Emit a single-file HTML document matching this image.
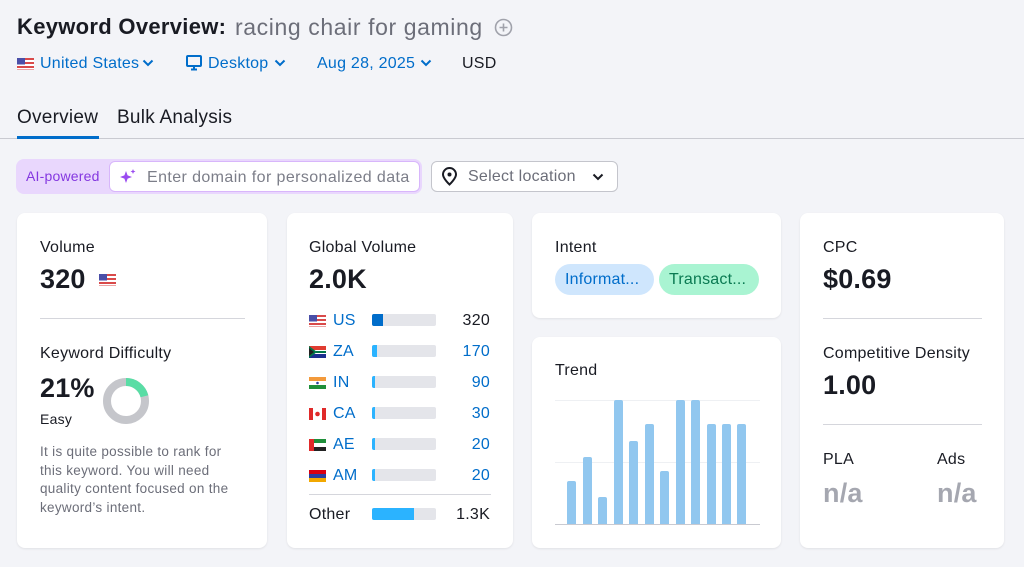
<!DOCTYPE html>
<html><head><meta charset="utf-8"><style>
*{box-sizing:border-box;margin:0;padding:0}
body{width:1024px;height:567px;background:#f3f4f8;font-family:"Liberation Sans",Arial,sans-serif;color:#191b23;position:relative;overflow:hidden;letter-spacing:0.25px}
.a{position:absolute;white-space:nowrap}
.card{position:absolute;background:#fff;border-radius:8px;box-shadow:0 1px 2px rgba(0,0,0,.08)}
.blue{color:#006dca}
.lbl{font-size:16px;color:#191b23}
.big{font-size:27px;font-weight:bold;letter-spacing:0.2px}
.hr{position:absolute;height:1px;background:#d5d6dc}
.bar{position:absolute;left:372px;width:64px;height:12px;background:#e4e5ea;border-radius:2px}
.bar i{display:block;height:12px;background:#2bb3ff;border-radius:2px 0 0 2px}
.flag{position:absolute;left:309px;width:17px;height:12px}
.cc{position:absolute;left:333px;font-size:16px;color:#006dca}
.num{position:absolute;right:534px;font-size:16px;color:#006dca;text-align:right}
.tb{position:absolute;width:9px;background:#91c7ef;border-radius:2px 2px 0 0;bottom:43px}
</style></head><body>
<div class="a" style="left:17px;top:14px;font-size:22px;font-weight:bold;letter-spacing:0.3px">Keyword Overview:</div>
<div class="a" style="left:235px;top:14px;font-size:23px;color:#6c6e79;letter-spacing:0.6px">racing chair for gaming</div>
<svg class="a" style="left:494px;top:18px" width="19" height="19" viewBox="0 0 19 19"><circle cx="9.5" cy="9.5" r="8" fill="none" stroke="#a0a2ab" stroke-width="1.6"/><path d="M9.5 5.5v8M5.5 9.5h8" stroke="#a0a2ab" stroke-width="1.6"/></svg>

<svg class="a" style="left:17px;top:58px" width="17" height="12"><rect width="17" height="12" fill="#d94a4a"/><rect y="2" width="17" height="2" fill="#fff"/><rect y="6" width="17" height="2" fill="#fff"/><rect y="10" width="17" height="1.5" fill="#fff"/><rect width="8" height="6.5" fill="#4a4fa8"/></svg>
<div class="a blue" style="left:40px;top:55px;font-size:16px">United States</div>
<svg class="a" style="left:142px;top:59px" width="12" height="8"><path d="M1.5 1.5l4.5 4.5 4.5-4.5" fill="none" stroke="#006dca" stroke-width="2"/></svg>
<svg class="a" style="left:186px;top:55px" width="16" height="16"><rect x="1" y="1" width="14" height="10" rx="1" fill="none" stroke="#006dca" stroke-width="2"/><path d="M5 14.5h6M8 11v3" stroke="#006dca" stroke-width="2"/></svg>
<div class="a blue" style="left:208px;top:55px;font-size:16px">Desktop</div>
<svg class="a" style="left:274px;top:59px" width="12" height="8"><path d="M1.5 1.5l4.5 4.5 4.5-4.5" fill="none" stroke="#006dca" stroke-width="2"/></svg>
<div class="a blue" style="left:317px;top:55px;font-size:16px">Aug 28, 2025</div>
<svg class="a" style="left:420px;top:59px" width="12" height="8"><path d="M1.5 1.5l4.5 4.5 4.5-4.5" fill="none" stroke="#006dca" stroke-width="2"/></svg>
<div class="a" style="left:462px;top:55px;font-size:16px">USD</div>

<div class="a" style="left:17px;top:107px;font-size:19px">Overview</div>
<div class="a" style="left:117px;top:107px;font-size:19px">Bulk Analysis</div>
<div class="a" style="left:0;top:138px;width:1024px;height:1px;background:#c9cad1"></div>
<div class="a" style="left:17px;top:136px;width:82px;height:3px;background:#006dca"></div>

<div class="a" style="left:16px;top:159px;width:406px;height:35px;background:#e9d7fd;border-radius:8px"></div>
<div class="a" style="left:26px;top:168px;font-size:14px;color:#8437e0;letter-spacing:0.2px">AI-powered</div>
<div class="a" style="left:109px;top:161px;width:311px;height:31px;background:#fff;border:1px solid #d8b6fb;border-radius:6px"></div>
<svg class="a" style="left:119px;top:168px" width="18" height="18" viewBox="0 0 18 18"><path d="M7 3l1.6 4.4L13 9l-4.4 1.6L7 15l-1.6-4.4L1 9l4.4-1.6z" fill="#9a4bf0"/><path d="M14 1l.7 1.8 1.8.7-1.8.7L14 6l-.7-1.8-1.8-.7 1.8-.7z" fill="#9a4bf0"/></svg>
<div class="a" style="left:147px;top:169px;font-size:16px;color:#7c7e89;letter-spacing:0.4px">Enter domain for personalized data</div>
<div class="a" style="left:431px;top:161px;width:187px;height:31px;background:#fff;border:1px solid #c4c5cc;border-radius:6px"></div>
<svg class="a" style="left:441px;top:167px" width="17" height="19" viewBox="0 0 17 19"><path d="M8.5 17.5S2 11.5 2 7.5a6.5 6.5 0 0 1 13 0c0 4-6.5 10-6.5 10z" fill="none" stroke="#191b23" stroke-width="2"/><circle cx="8.5" cy="7.5" r="2" fill="#191b23"/></svg>
<div class="a" style="left:468px;top:168px;font-size:16px;color:#6c6e79">Select location</div>
<svg class="a" style="left:592px;top:173px" width="12" height="8"><path d="M1.5 1.5l4.5 4.5 4.5-4.5" fill="none" stroke="#191b23" stroke-width="2"/></svg>

<!-- card 1 -->
<div class="card" style="left:17px;top:213px;width:250px;height:335px"></div>
<div class="a lbl" style="left:40px;top:239px">Volume</div>
<div class="a big" style="left:40px;top:264px">320</div>
<svg class="a" style="left:99px;top:274px" width="17" height="12"><rect width="17" height="12" fill="#d94a4a"/><rect y="2" width="17" height="2" fill="#fff"/><rect y="6" width="17" height="2" fill="#fff"/><rect y="10" width="17" height="1.5" fill="#fff"/><rect width="8" height="6.5" fill="#4a4fa8"/></svg>
<div class="hr" style="left:40px;top:318px;width:205px"></div>
<div class="a lbl" style="left:40px;top:345px">Keyword Difficulty</div>
<div class="a big" style="left:40px;top:373px">21%</div>
<div class="a" style="left:40px;top:411px;font-size:14px;color:#191b23">Easy</div>
<svg class="a" style="left:102px;top:377px" width="48" height="48" viewBox="0 0 48 48"><circle cx="24" cy="24" r="19" fill="none" stroke="#c5c6cb" stroke-width="8"/><circle cx="24" cy="24" r="19" fill="none" stroke="#59dda5" stroke-width="8" stroke-dasharray="25 200" transform="rotate(-90 24 24)"/></svg>
<div class="a" style="left:40px;top:443px;font-size:13.5px;line-height:18.5px;color:#6c6e79;white-space:normal;width:205px;letter-spacing:0.3px">It is quite possible to rank for this keyword. You will need quality content focused on the keyword’s intent.</div>

<!-- card 2 -->
<div class="card" style="left:287px;top:213px;width:226px;height:335px"></div>
<div class="a lbl" style="left:309px;top:239px">Global Volume</div>
<div class="a big" style="left:309px;top:264px">2.0K</div>

<svg class="flag" style="top:315px"><rect width="17" height="12" fill="#d94a4a"/><rect y="2" width="17" height="2" fill="#fff"/><rect y="6" width="17" height="2" fill="#fff"/><rect y="10" width="17" height="1.5" fill="#fff"/><rect width="8" height="6.5" fill="#4a4fa8"/></svg>
<div class="cc" style="top:312px">US</div><div class="bar" style="top:314px"><i style="width:11px;background:#006dca"></i></div><div class="num" style="top:312px;color:#191b23">320</div>

<svg class="flag" style="top:346px"><rect width="17" height="12" fill="#fff"/><rect width="17" height="4" fill="#e03c31"/><rect y="8" width="17" height="4" fill="#1b2f8f"/><path d="M0 0L8 6 0 12z" fill="#007749"/><path d="M0 2L5 6 0 10z" fill="#222"/><rect x="7" y="5" width="10" height="2" fill="#007749"/></svg>
<div class="cc" style="top:343px">ZA</div><div class="bar" style="top:345px"><i style="width:5px"></i></div><div class="num" style="top:343px">170</div>

<svg class="flag" style="top:377px"><rect width="17" height="4" fill="#f39a3b"/><rect y="4" width="17" height="4" fill="#fff"/><rect y="8" width="17" height="4" fill="#1f8f3a"/><circle cx="8.5" cy="6" r="1.3" fill="#2a3f9a"/></svg>
<div class="cc" style="top:374px">IN</div><div class="bar" style="top:376px"><i style="width:3px"></i></div><div class="num" style="top:374px">90</div>

<svg class="flag" style="top:408px"><rect width="17" height="12" fill="#fff"/><rect width="4" height="12" fill="#e02a2a"/><rect x="13" width="4" height="12" fill="#e02a2a"/><circle cx="8.5" cy="6" r="2.3" fill="#e02a2a"/></svg>
<div class="cc" style="top:405px">CA</div><div class="bar" style="top:407px"><i style="width:3px"></i></div><div class="num" style="top:405px">30</div>

<svg class="flag" style="top:439px"><rect width="17" height="4" fill="#1f8f3a"/><rect y="4" width="17" height="4" fill="#fff"/><rect y="8" width="17" height="4" fill="#222"/><rect width="5" height="12" fill="#e02a2a"/></svg>
<div class="cc" style="top:436px">AE</div><div class="bar" style="top:438px"><i style="width:3px"></i></div><div class="num" style="top:436px">20</div>

<svg class="flag" style="top:470px"><rect width="17" height="4" fill="#d90012"/><rect y="4" width="17" height="4" fill="#2a3fa0"/><rect y="8" width="17" height="4" fill="#f2a800"/></svg>
<div class="cc" style="top:467px">AM</div><div class="bar" style="top:469px"><i style="width:3px"></i></div><div class="num" style="top:467px">20</div>

<div class="hr" style="left:309px;top:494px;width:182px"></div>
<div class="a lbl" style="left:309px;top:506px">Other</div>
<div class="bar" style="top:508px"><i style="width:42px"></i></div>
<div class="num" style="top:506px;color:#191b23">1.3K</div>

<!-- intent -->
<div class="card" style="left:532px;top:213px;width:249px;height:105px"></div>
<div class="a lbl" style="left:555px;top:239px">Intent</div>
<div class="a" style="left:555px;top:264px;width:99px;height:31px;background:#cfe6fd;border-radius:16px;color:#006dca;font-size:16px;padding:7px 0 0 10px;letter-spacing:0.2px">Informat...</div>
<div class="a" style="left:659px;top:264px;width:100px;height:31px;background:#a9f4d2;border-radius:16px;color:#0a7a52;font-size:16px;padding:7px 0 0 10px;letter-spacing:0.2px">Transact...</div>

<!-- trend -->
<div class="card" style="left:532px;top:337px;width:249px;height:211px"></div>
<div class="a lbl" style="left:555px;top:362px">Trend</div>
<div class="a" style="left:555px;top:400px;width:205px;height:1px;background:#eef0f3"></div>
<div class="a" style="left:555px;top:462px;width:205px;height:1px;background:#eef0f3"></div>
<div class="a" style="left:555px;top:524px;width:205px;height:1px;background:#c9cad1"></div>
<div class="tb" style="left:567px;height:43px"></div>
<div class="tb" style="left:583px;height:67px"></div>
<div class="tb" style="left:598px;height:27px"></div>
<div class="tb" style="left:614px;height:124px"></div>
<div class="tb" style="left:629px;height:83px"></div>
<div class="tb" style="left:645px;height:100px"></div>
<div class="tb" style="left:660px;height:53px"></div>
<div class="tb" style="left:676px;height:124px"></div>
<div class="tb" style="left:691px;height:124px"></div>
<div class="tb" style="left:707px;height:100px"></div>
<div class="tb" style="left:722px;height:100px"></div>
<div class="tb" style="left:737px;height:100px"></div>

<!-- cpc -->
<div class="card" style="left:800px;top:213px;width:204px;height:335px"></div>
<div class="a lbl" style="left:823px;top:239px">CPC</div>
<div class="a big" style="left:823px;top:264px">$0.69</div>
<div class="hr" style="left:823px;top:318px;width:159px"></div>
<div class="a lbl" style="left:823px;top:345px">Competitive Density</div>
<div class="a big" style="left:823px;top:370px">1.00</div>
<div class="hr" style="left:823px;top:424px;width:159px"></div>
<div class="a lbl" style="left:823px;top:451px">PLA</div>
<div class="a lbl" style="left:937px;top:451px">Ads</div>
<div class="a big" style="left:823px;top:478px;color:#a5a7b0">n/a</div>
<div class="a big" style="left:937px;top:478px;color:#a5a7b0">n/a</div>
</body></html>
